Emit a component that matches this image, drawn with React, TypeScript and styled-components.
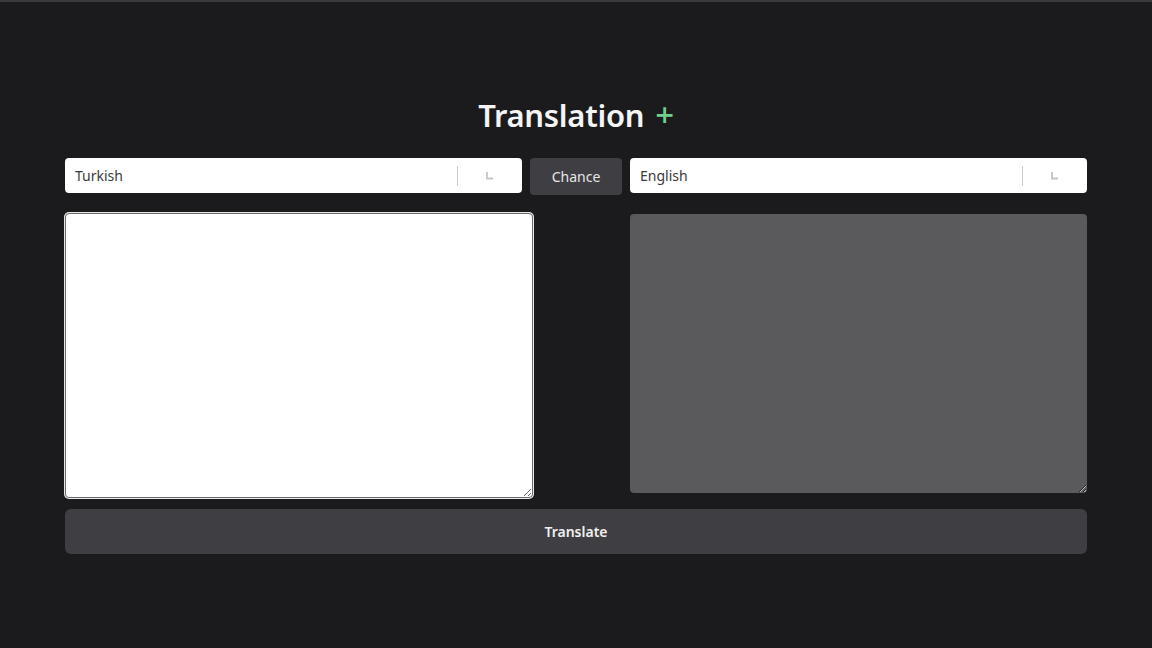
import { createGlobalStyle, styled } from "styled-components";

const GlobalStyle = createGlobalStyle`
  html, body {
    margin: 0;
    padding: 0;
    background: #1b1b1d;
  }
  body {
    font-family: "Noto Sans", "Open Sans", sans-serif;
  }
`;

const Page = styled.div`
  box-sizing: border-box;
  height: 648px;
  border-top: 2px solid #3a3a3c;
  background: #1b1b1d;
  padding: 92px 65px 0;
`;

const Container = styled.div`
  width: 1022px;
  display: flex;
  flex-direction: column;
`;

const Title = styled.h1`
  margin: 0 0 22px;
  text-align: center;
  font-size: 31px;
  font-weight: 600;
  line-height: 42px;
  color: #f4f4f4;
  letter-spacing: -0.3px;
`;

const Plus = styled.span`
  color: #6fd08f;
  font-weight: 500;
  font-size: 33px;
  margin-left: 11px;
`;

const LangRow = styled.div`
  display: flex;
  align-items: flex-start;
  gap: 8px;
`;

const Select = styled.div`
  flex: 1;
  height: 35px;
  box-sizing: border-box;
  background: #fff;
  border-radius: 4px;
  display: flex;
  align-items: center;
  padding-left: 10px;
`;

const SelectValue = styled.span`
  flex: 1;
  font-size: 14px;
  color: #3a3a3a;
`;

const Separator = styled.span`
  width: 1px;
  height: 20px;
  background: #cccccc;
`;

const Indicator = styled.span`
  width: 64px;
  display: flex;
  justify-content: center;
  align-items: center;
`;

const ChangeButton = styled.button`
  width: 92px;
  height: 37px;
  border: none;
  border-radius: 4px;
  background: #3f3e43;
  color: #e6e6e6;
  font-family: inherit;
  font-size: 14px;
`;

const TextRow = styled.div`
  display: flex;
  justify-content: space-between;
  align-items: flex-start;
  margin-top: 18px;
`;

const Source = styled.textarea`
  box-sizing: border-box;
  width: 468px;
  height: 285px;
  margin: 0;
  padding: 10px 8px;
  background: #fff;
  border: 1px solid #6a6a6a;
  border-radius: 4px;
  box-shadow: 0 0 0 1px #e8e8e8;
  outline: none;
  font-family: inherit;
  font-size: 16px;
  color: #222;
`;

const Target = styled.textarea`
  box-sizing: border-box;
  width: 457px;
  height: 279px;
  margin: 1px 0 0;
  padding: 10px;
  background: #5a5a5c;
  border: none;
  border-radius: 4px;
  outline: none;
  font-family: inherit;
  font-size: 16px;
  color: #eee;
`;

const TranslateButton = styled.button`
  margin-top: 11px;
  height: 45px;
  border: none;
  border-radius: 6px;
  background: #3f3e43;
  color: #f0f0f0;
  font-family: inherit;
  font-size: 14px;
  font-weight: 600;
`;

const Chevron = () => (
  <svg width="12" height="12" viewBox="0 0 12 12">
    <path d="M3 2 V8.5 H9" fill="none" stroke="#c4c4c4" strokeWidth="1.8" />
  </svg>
);

const LanguageSelect = ({ value }: { value: string }) => (
  <Select>
    <SelectValue>{value}</SelectValue>
    <Separator />
    <Indicator>
      <Chevron />
    </Indicator>
  </Select>
);

export default function App() {
  return (
    <>
      <GlobalStyle />
      <Page>
        <Container>
          <Title>
            Translation<Plus>+</Plus>
          </Title>
          <LangRow>
            <LanguageSelect value="Turkish" />
            <ChangeButton>Chance</ChangeButton>
            <LanguageSelect value="English" />
          </LangRow>
          <TextRow>
            <Source autoFocus />
            <Target readOnly />
          </TextRow>
          <TranslateButton>Translate</TranslateButton>
        </Container>
      </Page>
    </>
  );
}
